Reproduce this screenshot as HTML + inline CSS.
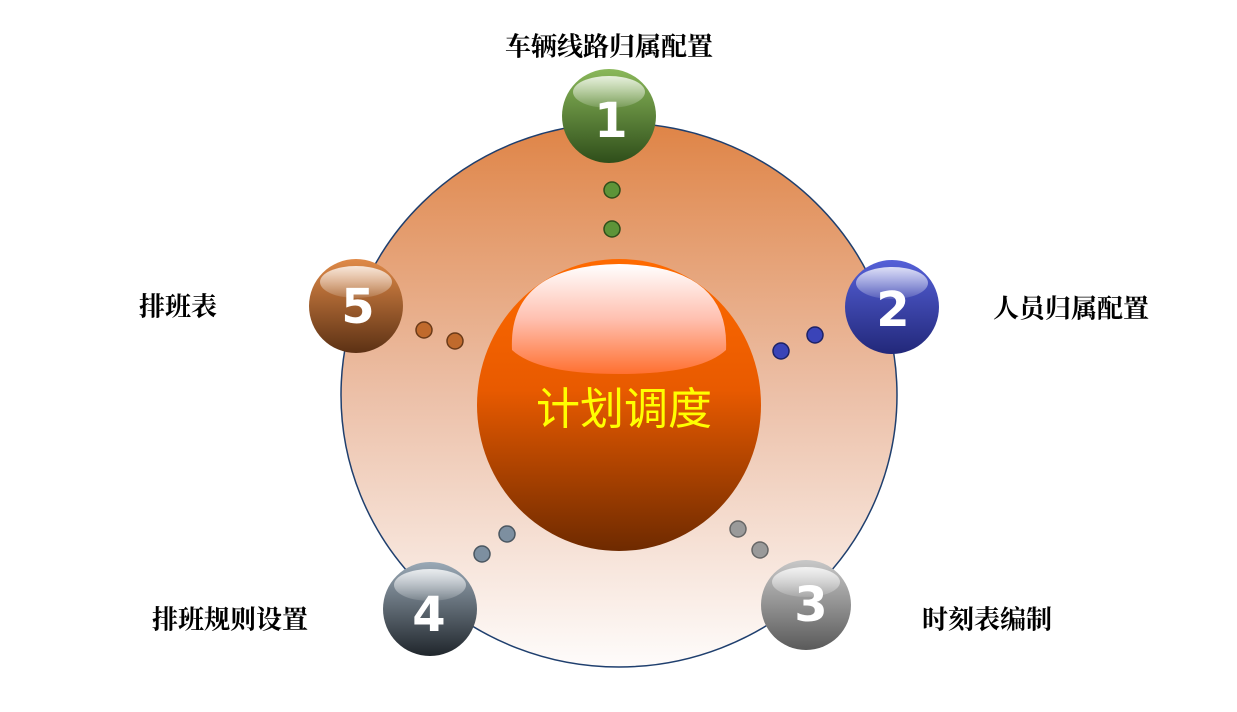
<!DOCTYPE html>
<html><head><meta charset="utf-8"><style>
body{margin:0;width:1237px;height:712px;background:#fff;position:relative;overflow:hidden;font-family:"Liberation Serif","Noto Serif CJK SC",serif}
.l{position:absolute;font-weight:bold;font-size:26px;color:#000;white-space:nowrap;transform:translate(-50%,-50%)}
</style></head><body>
<svg width="1237" height="712" style="position:absolute;left:0;top:0">
<defs>
<linearGradient id="big" x1="0" y1="0" x2="0" y2="1">
<stop offset="0" stop-color="#df8446"/><stop offset="0.5" stop-color="#ecc0a8"/><stop offset="1" stop-color="#fefcfb"/></linearGradient>
<linearGradient id="cen" x1="0" y1="0" x2="0" y2="1">
<stop offset="0" stop-color="#ff6a00"/><stop offset="0.45" stop-color="#e85a00"/><stop offset="1" stop-color="#6e2a00"/></linearGradient>
<linearGradient id="hl" x1="0" y1="0" x2="0" y2="1">
<stop offset="0" stop-color="#fff"/><stop offset="1" stop-color="#fff" stop-opacity="0.15"/></linearGradient>
<linearGradient id="hc" x1="0" y1="0" x2="0" y2="1">
<stop offset="0" stop-color="#fff"/><stop offset="0.5" stop-color="#ffc0b0"/><stop offset="1" stop-color="#ff7030"/></linearGradient>
<linearGradient id="g1" x1="0" y1="0" x2="0" y2="1"><stop offset="0" stop-color="#8ab85a"/><stop offset="1" stop-color="#2f4e1a"/></linearGradient>
<linearGradient id="g2" x1="0" y1="0" x2="0" y2="1"><stop offset="0" stop-color="#5560d8"/><stop offset="1" stop-color="#22287a"/></linearGradient>
<linearGradient id="g3" x1="0" y1="0" x2="0" y2="1"><stop offset="0" stop-color="#c8c8c8"/><stop offset="1" stop-color="#5a5a5a"/></linearGradient>
<linearGradient id="g4" x1="0" y1="0" x2="0" y2="1"><stop offset="0" stop-color="#9aa9b6"/><stop offset="1" stop-color="#20262c"/></linearGradient>
<linearGradient id="g5" x1="0" y1="0" x2="0" y2="1"><stop offset="0" stop-color="#e08a48"/><stop offset="1" stop-color="#5c3114"/></linearGradient>
</defs>
<ellipse cx="619" cy="395" rx="278" ry="272" fill="url(#big)" stroke="#1f3f6e" stroke-width="1.5"/>
<ellipse cx="619" cy="405" rx="142" ry="146" fill="url(#cen)"/>
<path d="M512 350 Q508 266 619 264 Q730 266 726 350 Q700 374 619 374 Q538 374 512 350Z" fill="url(#hc)"/>
<text x="624" y="424" text-anchor="middle" font-size="44" fill="#ffff00" font-family="Noto Sans CJK SC,sans-serif">计划调度</text>
<g font-family="DejaVu Sans,sans-serif" font-weight="bold" font-size="48" fill="#fff" text-anchor="middle">
<circle cx="609" cy="116" r="47" fill="url(#g1)"/><ellipse cx="609" cy="92" rx="36" ry="16" fill="url(#hl)" opacity=".8"/><text x="611" y="137">1</text>
<circle cx="892" cy="307" r="47" fill="url(#g2)"/><ellipse cx="892" cy="283" rx="36" ry="16" fill="url(#hl)" opacity=".8"/><text x="893" y="326">2</text>
<circle cx="806" cy="605" r="45" fill="url(#g3)"/><ellipse cx="806" cy="582" rx="34" ry="15" fill="url(#hl)" opacity=".8"/><text x="811" y="621">3</text>
<circle cx="430" cy="609" r="47" fill="url(#g4)"/><ellipse cx="430" cy="585" rx="36" ry="16" fill="url(#hl)" opacity=".8"/><text x="429" y="631">4</text>
<circle cx="356" cy="306" r="47" fill="url(#g5)"/><ellipse cx="356" cy="282" rx="36" ry="16" fill="url(#hl)" opacity=".8"/><text x="358" y="323">5</text>
</g>
<g stroke-width="1.5">
<circle cx="612" cy="190" r="8" fill="#5d9438" stroke="#2f4e1a"/><circle cx="612" cy="229" r="8" fill="#5d9438" stroke="#2f4e1a"/>
<circle cx="781" cy="351" r="8" fill="#3a44b8" stroke="#1c2266"/><circle cx="815" cy="335" r="8" fill="#3a44b8" stroke="#1c2266"/>
<circle cx="738" cy="529" r="8" fill="#9a9a9a" stroke="#666"/><circle cx="760" cy="550" r="8" fill="#9a9a9a" stroke="#666"/>
<circle cx="507" cy="534" r="8" fill="#7d8fa0" stroke="#4a5660"/><circle cx="482" cy="554" r="8" fill="#7d8fa0" stroke="#4a5660"/>
<circle cx="424" cy="330" r="8" fill="#c06a2c" stroke="#6a3a18"/><circle cx="455" cy="341" r="8" fill="#c06a2c" stroke="#6a3a18"/>
</g>
</svg>
<div class="l" style="left:609px;top:45px">车辆线路归属配置</div>
<div class="l" style="left:1071px;top:307px">人员归属配置</div>
<div class="l" style="left:987px;top:618px">时刻表编制</div>
<div class="l" style="left:230px;top:618px">排班规则设置</div>
<div class="l" style="left:178px;top:305px">排班表</div>
</body></html>
